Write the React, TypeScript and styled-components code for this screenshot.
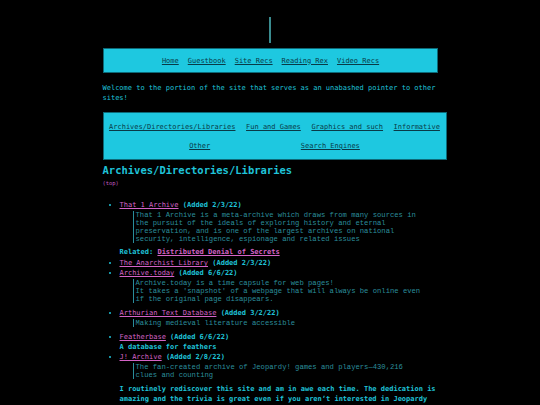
import styled, { createGlobalStyle } from "styled-components";

const GlobalStyle = createGlobalStyle`
  body {
    margin: 0;
    background: #000000;
    color: #1fc3d8;
    font-family: "DejaVu Sans Mono", "Liberation Mono", monospace;
    font-size: 7px;
    line-height: 10px;
  }
  a {
    color: inherit;
  }
`

const Page = styled.div`
  width: 335px;
  margin: 0 auto;
  padding-top: 17px;
`

const Divider = styled.div`
  width: 2px;
  height: 26px;
  margin: 0 auto;
  background: #3a8b8f;
`

const NavBar = styled.nav`
  margin-top: 5px;
  height: 23px;
  background: #1ec8e0;
  border: 1px solid #0d6a78;
  display: flex;
  justify-content: center;
  align-items: center;
  gap: 9px;
  padding-left: 1px;
`

const NavLink = styled.a`
  color: #093a47;
  text-decoration: underline;
`

const CategoryLink = styled(NavLink)`
  margin: 0 5px;
`

const Intro = styled.p`
  margin: 10px 0 0;
`

const CategoryNav = styled.nav`
  margin-top: 9px;
  width: 342px;
  background: #1ec8e0;
  border: 1px solid #0d6a78;
  display: flex;
  flex-wrap: wrap;
  justify-content: space-evenly;
  row-gap: 9px;
  padding: 9px 0 8px;
`

const Heading = styled.h2`
  margin: 4px 0 0;
  font-size: 10.5px;
  line-height: 13px;
  font-weight: bold;
`

const TopLink = styled.a`
  display: block;
  margin-top: 3px;
  font-size: 5.4px;
  line-height: 7px;
  color: #c65cc0;
  text-decoration: none;
`

const List = styled.ul`
  margin: 13px 0 0;
  padding-left: 17px;
  list-style: disc;
`

const Item = styled.li`
  &::marker {
    font-size: 6px;
  }
`

const SiteLink = styled.a`
  color: #d463c6;
  text-decoration: underline;
`

const Added = styled.span`
  font-weight: bold;
`

const Quote = styled.blockquote<{ $after?: number }>`
  margin: 1px 0 ${(p) => p.$after ?? 5}px 13px;
  padding-left: 2px;
  border-left: 1px solid #2a8d9a;
  font-family: "Liberation Mono", "Courier New", monospace;
  font-size: 7.2px;
  line-height: 8px;
  color: #2b8e9c;
`

const Note = styled.div<{ $after?: number }>`
  font-weight: bold;
  margin-bottom: ${(p) => p.$after ?? 0}px;
`

const Comment = styled.p`
  margin: 0;
  font-weight: bold;
`

type Entry = {
  name: string
  added: string
  quote?: string[]
  note?: string
  related?: string
  comment?: string[]
}

const entries: Entry[] = [
  {
    name: "That 1 Archive",
    added: "2/3/22",
    quote: [
      "That 1 Archive is a meta-archive which draws from many sources in",
      "the pursuit of the ideals of exploring history and eternal",
      "preservation, and is one of the largest archives on national",
      "security, intelligence, espionage and related issues",
    ],
    related: "Distributed Denial of Secrets",
  },
  { name: "The Anarchist Library", added: "2/3/22" },
  {
    name: "Archive.today",
    added: "6/6/22",
    quote: [
      "Archive.today is a time capsule for web pages!",
      "It takes a 'snapshot' of a webpage that will always be online even",
      "if the original page disappears.",
    ],
  },
  {
    name: "Arthurian Text Database",
    added: "3/2/22",
    quote: ["Making medieval literature accessible"],
  },
  { name: "Featherbase", added: "6/6/22", note: "A database for feathers" },
  {
    name: "J! Archive",
    added: "2/8/22",
    quote: [
      "The fan-created archive of Jeopardy! games and players\u2014430,216",
      "clues and counting",
    ],
    comment: [
      "I routinely rediscover this site and am in awe each time. The dedication is",
      "amazing and the trivia is great even if you aren\u2019t interested in Jeopardy",
    ],
  },
]

const mainNav = ["Home", "Guestbook", "Site Recs", "Reading Rex", "Video Recs"]
const categories = [
  "Archives/Directories/Libraries",
  "Fun and Games",
  "Graphics and such",
  "Informative",
  "Other",
  "Search Engines",
]

export default function App() {
  return (
    <>
      <GlobalStyle />
      <Page>
        <Divider />
        <NavBar>
          {mainNav.map((n) => (
            <NavLink key={n} href="#">{n}</NavLink>
          ))}
        </NavBar>
        <Intro>
          Welcome to the portion of the site that serves as an unabashed pointer to other sites!
        </Intro>
        <CategoryNav>
          {categories.map((c) => (
            <CategoryLink key={c} href="#">{c}</CategoryLink>
          ))}
        </CategoryNav>
        <Heading>Archives/Directories/Libraries</Heading>
        <TopLink href="#">(top)</TopLink>
        <List>
          {entries.map((e) => (
            <Item key={e.name}>
              <SiteLink href="#">{e.name}</SiteLink> <Added>(Added {e.added})</Added>
              {e.quote && (
                <Quote $after={e.related ? 4 : 5}>
                  {e.quote.map((l) => (
                    <div key={l}>{l}</div>
                  ))}
                </Quote>
              )}
              {e.note && <Note>{e.note}</Note>}
              {e.related && (
                <Note $after={1}>
                  Related: <SiteLink href="#">{e.related}</SiteLink>
                </Note>
              )}
              {e.comment && (
                <Comment>
                  {e.comment.map((l) => (
                    <div key={l}>{l}</div>
                  ))}
                </Comment>
              )}
            </Item>
          ))}
        </List>
      </Page>
    </>
  )
}
